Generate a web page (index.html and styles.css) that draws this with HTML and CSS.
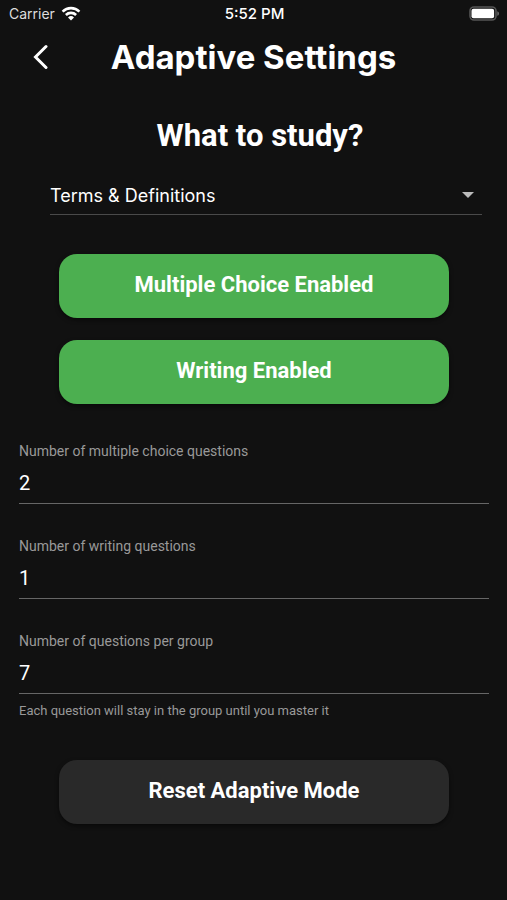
FILE: index.html
```html
<!DOCTYPE html>
<html lang="en">
<head>
  <meta charset="UTF-8">
  <meta name="viewport" content="width=device-width, initial-scale=1.0">
  <title>Adaptive Settings</title>
  <link rel="stylesheet" href="styles.css">
</head>
<body>
  <!-- Status bar -->
  <div class="status-bar">
    <div class="carrier">
      <span>Carrier</span>
      <svg width="20" height="15" viewBox="0 0 20 15" aria-hidden="true">
        <g fill="none" stroke="#fff" stroke-width="2.6">
          <path d="M1.6 5.6a12 12 0 0 1 16.8 0"/>
          <path d="M4.9 9a7.3 7.3 0 0 1 10.2 0"/>
        </g>
        <path d="M10 14.6l-3-3.2a4.3 4.3 0 0 1 6 0z" fill="#fff"/>
      </svg>
    </div>
    <span class="time">5:52 PM</span>
    <div class="battery">
      <svg width="31" height="15" viewBox="0 0 31 15" aria-hidden="true">
        <rect x="1" y="1" width="26" height="13" rx="4" fill="none" stroke="#555" stroke-width="1.6"/>
        <rect x="2.5" y="2.7" width="22.6" height="9.6" rx="2" fill="#fff"/>
        <path d="M28.4 5.2c2 .8 2 3.8 0 4.600z" fill="#777"/>
      </svg>
    </div>
  </div>

  <header class="app-bar">
    <button class="back" type="button" aria-label="Back">
      <svg width="16" height="26" viewBox="0 0 16 26" aria-hidden="true">
        <path d="M14 2.500L3.500 13L14 23.500" fill="none" stroke="#fff" stroke-width="3" stroke-linecap="round"/>
      </svg>
    </button>
    <h1>Adaptive Settings</h1>
  </header>

  <main>
    <h2><label for="study">What to study?</label></h2>
    <select id="study" class="study">
      <option>Terms &amp; Definitions</option>
      <option>Terms</option>
      <option>Definitions</option>
    </select>

    <div class="modes">
      <button class="btn green" type="button">Multiple Choice Enabled</button>
      <button class="btn green" type="button">Writing Enabled</button>
    </div>

    <form class="fields">
      <div class="field">
        <label for="mc">Number of multiple choice questions</label>
        <input type="text" inputmode="numeric" id="mc" value="2">
      </div>
      <div class="field">
        <label for="writing">Number of writing questions</label>
        <input type="text" inputmode="numeric" id="writing" value="1">
      </div>
      <div class="field">
        <label for="group">Number of questions per group</label>
        <input type="text" inputmode="numeric" id="group" value="7" aria-describedby="group-help">
        <p id="group-help">Each question will stay in the group until you master it</p>
      </div>
    </form>

    <button class="btn dark" type="button">Reset Adaptive Mode</button>
  </main>
</body>
</html>
```
FILE: styles.css
```css
* {
  box-sizing: border-box;
}
body {
  margin: 0;
  background: #111;
  color: #fff;
  font-family: Roboto, sans-serif;
}
h1, h2, p {
  margin: 0;
}
button, input, select {
  font-family: inherit;
  color: inherit;
  border: none;
  border-radius: 0;
}

/* Status bar */
.status-bar {
  display: grid;
  grid-template-columns: 1fr auto 1fr;
  align-items: center;
  height: 27px;
  padding: 0 7px 0 9px;
  font-family: Inter, sans-serif;
  font-size: 14px;
}
.carrier {
  display: flex;
  align-items: center;
  gap: 6px;
  color: #ddd;
}
.time {
  font-size: 15px;
  font-weight: 500;
}
.battery {
  display: flex;
  justify-content: flex-end;
}

/* App bar */
.app-bar {
  display: grid;
  grid-template-columns: 48px 1fr 48px;
  align-items: center;
  height: 59px;
  padding: 0 16px;
}
.back {
  display: flex;
  justify-content: center;
  padding: 8px;
  background: none;
  cursor: pointer;
}
h1 {
  font-family: Inter, sans-serif;
  font-size: 33px;
  font-weight: 700;
  line-height: 40px;
  text-align: center;
  white-space: nowrap;
}

main {
  padding: 30px 18px 76px 19px;
}
h2 {
  padding-left: 12px;
  font-size: 31px;
  font-weight: 700;
  line-height: 40px;
  text-align: center;
}
.study {
  display: block;
  width: calc(100% - 38px);
  height: 39px;
  margin: 20px 0 0 31px;
  padding: 0 28px 0 0;
  appearance: none;
  border-bottom: 1px solid #4a4a4a;
  background: url("data:image/svg+xml,%3Csvg xmlns='http://www.w3.org/2000/svg' width='12' height='6'%3E%3Cpath d='M0 0h12L6 6z' fill='%23bbb'/%3E%3C/svg%3E") no-repeat right 8px center;
  font-family: Inter, sans-serif;
  font-size: 18px;
}
.study option {
  background: #222;
}

/* Buttons */
.modes {
  display: grid;
  gap: 22px;
  margin-top: 39px;
}
.btn {
  display: block;
  width: calc(100% - 80px);
  height: 64px;
  margin: 0 auto;
  padding: 0 0 4px;
  border-radius: 18px;
  box-shadow: 0 2px 4px rgba(0, 0, 0, 0.5);
  font-size: 22px;
  font-weight: 700;
  cursor: pointer;
}
.green {
  background: #4caf50;
}
.dark {
  background: #292929;
}

/* Number fields */
.fields {
  display: grid;
  gap: 32px;
  margin: 37px 0 40px;
}
.field label {
  display: block;
  font-size: 14px;
  line-height: 20px;
  color: #999;
}
.field input {
  display: block;
  width: 100%;
  height: 43px;
  padding: 2px 0 0;
  border-bottom: 1px solid #666;
  background: none;
  font-size: 20px;
}
.field p {
  margin-top: 8px;
  font-size: 13px;
  line-height: 18px;
  color: #999;
}
```
